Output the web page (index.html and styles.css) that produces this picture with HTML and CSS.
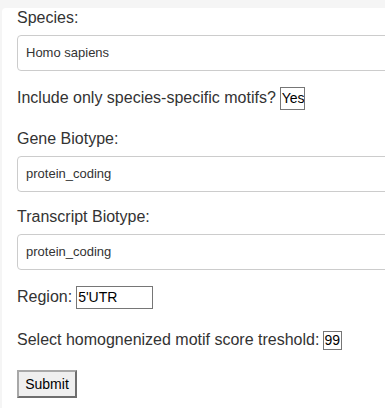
FILE: index.html
```html
<!DOCTYPE html>
<html>
<head>
<meta charset="utf-8">
<link rel="stylesheet" href="styles.css">
</head>
<body>
<div class="card">
  <div class="label">Species:</div>
  <div class="control">Homo sapiens</div>

  <div class="row row-include"><span>Include only species-specific motifs?</span><span class="box box-yes">Yes</span></div>

  <div class="label label-gene">Gene Biotype:</div>
  <div class="control">protein_coding</div>

  <div class="label label-transcript">Transcript Biotype:</div>
  <div class="control">protein_coding</div>

  <div class="row row-region"><span>Region:</span><span class="box box-region">5'UTR</span></div>

  <div class="row row-score"><span>Select homognenized motif score treshold:</span><span class="box box-score">99</span></div>

  <div class="actions"><button class="submit" type="button">Submit</button></div>
</div>
</body>
</html>
```
FILE: styles.css
```css
html, body {
  margin: 0;
  padding: 0;
}
body {
  background: #f5f5f5;
  font-family: "Liberation Sans", Arial, sans-serif;
  color: #333;
  overflow: hidden;
  width: 385px;
  height: 408px;
}
.card {
  box-sizing: border-box;
  margin: 8px 0 0 2px;
  background: #fff;
  border-top-left-radius: 4px;
  padding: 0 0 0 15px;
  width: 383px;
  height: 400px;
  overflow: hidden;
  display: flex;
  flex-direction: column;
  align-items: flex-start;
}
.label {
  font-size: 16px;
  line-height: 20px;
}
.control {
  box-sizing: border-box;
  flex: none;
  width: 430px;
  height: 36px;
  margin-top: 7px;
  border: 1px solid #ccc;
  border-radius: 4px;
  padding: 0 8px;
  font-size: 13px;
  line-height: 34px;
  color: #333;
}
.row {
  display: flex;
  align-items: baseline;
  gap: 4px;
  font-size: 16px;
  line-height: 20px;
}
.box {
  display: inline-block;
  box-sizing: border-box;
  border: 1px solid #767676;
  font-size: 14px;
  color: #000;
  padding: 0 0 0 1px;
  overflow: hidden;
  white-space: nowrap;
}
.row-include { margin-top: 16px; }
.box-yes { width: 25px; height: 23px; line-height: 21px; }
.label-gene { margin-top: 19px; }
.label-transcript { margin-top: 15px; }
.row-region { margin-top: 16px; }
.box-region { width: 77px; height: 23px; line-height: 21px; }
.row-score { margin-top: 21px; }
.box-score { width: 19px; height: 19px; line-height: 17px; padding: 0; }
.actions { margin-top: 20px; }
.submit {
  font-family: "Liberation Sans", Arial, sans-serif;
  font-size: 14px;
  line-height: 16px;
  padding: 4px 6px;
  height: 28px;
  width: 60px;
  background: #efefef;
  color: #000;
  border-style: solid;
  border-width: 2px;
  border-color: #a8a8a8 #6e6e6e #6e6e6e #a8a8a8;
  border-radius: 0;
}
```
